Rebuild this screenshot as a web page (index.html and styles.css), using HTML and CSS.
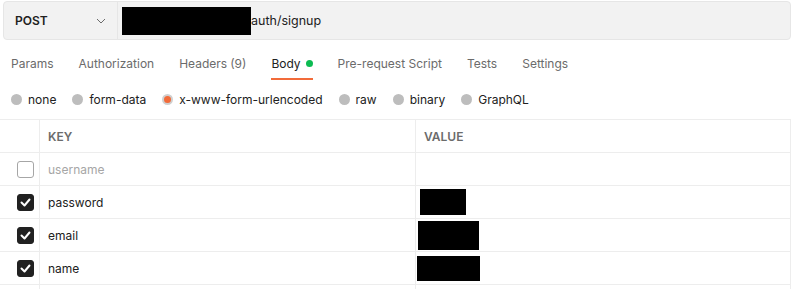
FILE: index.html
```html
<!DOCTYPE html>
<html lang="en">
  <head>
    <meta charset="UTF-8" />
    <meta name="viewport" content="width=device-width, initial-scale=1.0" />
    <title>Request</title>
    <link rel="stylesheet" href="styles.css">
  </head>
  <body>
    <div class="url-bar">
      <div class="method">
        <span>POST</span>
        <svg class="chevron" width="10" height="6" viewBox="0 0 10 6">
          <path d="M1 1l4 4 4-4" fill="none" stroke="#6b6b6b" stroke-width="1" />
        </svg>
      </div>
      <div class="url">
        <span class="redact url-redact"></span>
        <span>auth/signup</span>
      </div>
    </div>

    <div class="tabs">
      <div class="tab">Params</div>
      <div class="tab">Authorization</div>
      <div class="tab">Headers <span class="count">(9)</span></div>
      <div class="tab active">Body <span class="dot"></span></div>
      <div class="tab">Pre-request Script</div>
      <div class="tab">Tests</div>
      <div class="tab">Settings</div>
    </div>

    <div class="body-types">
      <label class="radio"><span class="circle"></span>none</label>
      <label class="radio"><span class="circle"></span>form-data</label>
      <label class="radio"><span class="circle on"></span>x-www-form-urlencoded</label>
      <label class="radio"><span class="circle"></span>raw</label>
      <label class="radio"><span class="circle"></span>binary</label>
      <label class="radio"><span class="circle"></span>GraphQL</label>
    </div>

    <div class="params">
      <div class="row head">
        <div class="cell check"></div>
        <div class="cell key">KEY</div>
        <div class="cell value">VALUE</div>
      </div>
      <div class="row">
        <div class="cell check"><span class="box"></span></div>
        <div class="cell key placeholder">username</div>
        <div class="cell value"></div>
      </div>
      <div class="row">
        <div class="cell check"><span class="box checked"><svg width="11" height="9" viewBox="0 0 11 9"><path d="M1.5 4.5l3 3 5-6" fill="none" stroke="#fff" stroke-width="2" stroke-linecap="round" stroke-linejoin="round" /></svg></span></div>
        <div class="cell key">password</div>
        <div class="cell value"><span class="redact r1"></span></div>
      </div>
      <div class="row">
        <div class="cell check"><span class="box checked"><svg width="11" height="9" viewBox="0 0 11 9"><path d="M1.5 4.5l3 3 5-6" fill="none" stroke="#fff" stroke-width="2" stroke-linecap="round" stroke-linejoin="round" /></svg></span></div>
        <div class="cell key">email</div>
        <div class="cell value"><span class="redact r2"></span></div>
      </div>
      <div class="row">
        <div class="cell check"><span class="box checked"><svg width="11" height="9" viewBox="0 0 11 9"><path d="M1.5 4.5l3 3 5-6" fill="none" stroke="#fff" stroke-width="2" stroke-linecap="round" stroke-linejoin="round" /></svg></span></div>
        <div class="cell key">name</div>
        <div class="cell value"><span class="redact r3"></span></div>
      </div>
      <div class="row stub">
        <div class="cell check"></div>
        <div class="cell key"></div>
        <div class="cell value"></div>
      </div>
    </div>
  </body>
</html>
```

FILE: styles.css
```css
body {
  margin: 0;
  font-family: Inter, "Noto Sans", sans-serif;
  font-size: 12px;
  color: #212121;
  background: #fff;
  width: 800px;
  height: 298px;
  overflow: hidden;
}
.url-bar {
  display: flex;
  margin: 1px 9px 0 3px;
  height: 37px;
  background: #f2f2f2;
  border: 1px solid #e6e6e6;
  border-radius: 4px;
}
.method {
  width: 114px;
  display: flex;
  align-items: center;
  justify-content: space-between;
  padding: 0 11px 0 11px;
  box-sizing: border-box;
  border-right: 1px solid #e6e6e6;
  font-weight: 600;
  font-size: 12px;
}
.url {
  display: flex;
  align-items: center;
  padding-left: 4px;
  font-size: 12.5px;
  color: #212121;
}
.redact {
  display: inline-block;
  background: #000;
}
.url-redact {
  width: 129px;
  height: 28px;
}
.tabs {
  display: flex;
  gap: 25px;
  padding: 0 11px;
  margin-top: 15px;
  height: 26px;
}
.tab {
  color: #6b6b6b;
  display: flex;
  align-items: flex-start;
  gap: 5px;
  height: 25px;
  padding-top: 1px;
  box-sizing: border-box;
  white-space: nowrap;
  font-size: 12px;
}
.tab.active {
  color: #212121;
  border-bottom: 2px solid #f26b3a;
}
.tab .count {
  margin-left: -2px;
  color: #6b6b6b;
}
.dot {
  width: 7px;
  height: 7px;
  border-radius: 50%;
  background: #0cbb52;
  margin-top: 4px;
}
.body-types {
  display: flex;
  gap: 16px;
  padding: 0 11px;
  margin-top: 6px;
  height: 25px;
  align-items: center;
}
.radio {
  display: flex;
  align-items: center;
  gap: 6px;
  color: #212121;
}
.circle {
  width: 11px;
  height: 11px;
  border-radius: 50%;
  background: #bdbdbd;
  box-sizing: border-box;
}
.circle.on {
  background: #f26b3a;
  border: 2px solid #d0d0d0;
}
.params {
  margin-top: 7px;
  width: 791px;
  border-top: 1px solid #ededed;
}
.row {
  display: flex;
  height: 33px;
  border-bottom: 1px solid #ededed;
  box-sizing: border-box;
}
.row.stub {
  height: 4px;
  border-bottom: none;
}
.cell {
  display: flex;
  align-items: center;
  box-sizing: border-box;
}
.check {
  width: 40px;
  justify-content: flex-end;
  padding-right: 5px;
  border-right: 1px solid #ededed;
}
.key {
  width: 376px;
  padding-left: 8px;
  border-right: 1px solid #ededed;
}
.value {
  flex: 1;
  padding-left: 8px;
  border-right: 1px solid #ededed;
}
.head .cell {
  font-weight: 600;
  font-size: 12px;
  color: #6b6b6b;
}
.placeholder {
  color: #a6a6a6;
}
.box {
  width: 17px;
  height: 17px;
  box-sizing: border-box;
  border: 1px solid #a6a6a6;
  border-radius: 3px;
  display: flex;
  align-items: center;
  justify-content: center;
}
.box.checked {
  background: #212121;
  border-color: #212121;
}
.r1 {
  width: 46px;
  height: 26px;
  margin-left: -4px;
}
.r2 {
  width: 61px;
  height: 29px;
  margin-left: -6px;
}
.r3 {
  width: 63px;
  height: 25px;
  margin-left: -7px;
}
```
